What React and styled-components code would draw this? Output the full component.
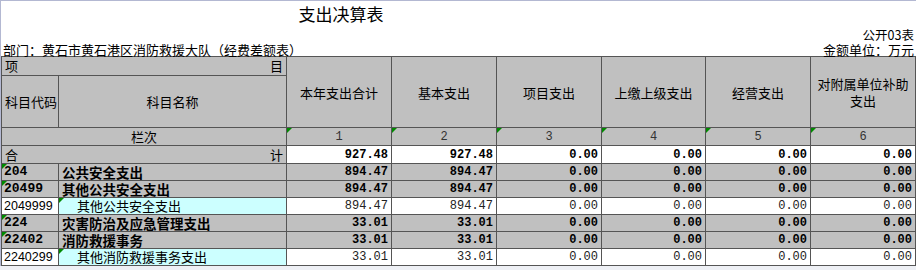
import React from 'react'
import styled, { createGlobalStyle, css } from 'styled-components'

const colors = {
	gray: '#c0c0c0',
	cyan: '#ccffff',
	white: '#ffffff',
	line: '#555555',
	frame: '#b3b8d2',
	marker: '#008a00'
}

const cjk = `"Noto Sans CJK SC", "Liberation Sans", sans-serif`
const mono = `"Liberation Mono", "Noto Sans CJK SC", monospace`

const GlobalStyle = createGlobalStyle`
	html, body {
		margin: 0;
		padding: 0;
		background: #eef0f5;
	}
	body {
		font-family: ${cjk};
		color: #000;
	}
`

const Sheet = styled.div`
	width: 915px;
	background: #fff;
	border-top: 1px solid ${colors.frame};
	border-left: 1px solid ${colors.frame};
`

const Caption = styled.div`
	width: 680px;
	height: 26px;
	line-height: 26px;
	text-align: center;
	font-size: 17px;
`

const SheetNo = styled.div`
	height: 14px;
	line-height: 14px;
	padding-top: 1px;
	padding-right: 2px;
	text-align: right;
	font-size: 12.5px;
`

const InfoRow = styled.div`
	display: flex;
	justify-content: space-between;
	align-items: flex-end;
	height: 14px;
	padding: 0 2px;
	font-size: 13px;
	line-height: 13px;
`

const Table = styled.table`
	width: 914px;
	table-layout: fixed;
	border-collapse: collapse;
`

const Row = styled.tr`
	height: ${p => p.h}px;
`

const Cell = styled.td`
	position: relative;
	padding: 0 3px;
	border: 1px solid ${colors.line};
	background: ${p => colors[p.bg || 'gray']};
	font-size: 13px;
	line-height: 14px;
	white-space: nowrap;
	vertical-align: middle;

	${p =>
		p.mark &&
		css`
			&::before {
				content: '';
				position: absolute;
				top: 0;
				left: 0;
				border-top: 5px solid ${colors.marker};
				border-right: 5px solid transparent;
			}
		`}
`

const HeadCell = styled(Cell)`
	text-align: center;
	white-space: normal;
	line-height: 17px;
`

const SplitCell = styled(Cell)`
	& > div {
		display: flex;
		justify-content: space-between;
	}
`

const CodeCell = styled(Cell)`
	padding-left: 2px;
	font-family: ${p => (p.bold ? mono : '"Liberation Sans", sans-serif')};
	font-weight: ${p => (p.bold ? 'bold' : 'normal')};
	font-size: ${p => (p.bold ? 13 : 12.5)}px;
`

const NameCell = styled(Cell)`
	padding-left: ${p => (p.indent ? 18 : 3)}px;
	font-weight: ${p => (p.bold ? 'bold' : 'normal')};
	font-size: ${p => (p.bold ? 13.5 : 13)}px;
`

const NumCell = styled(Cell)`
	text-align: right;
	padding-right: 3px;
	font-family: ${mono};
	font-size: 12px;
	font-weight: ${p => (p.bold ? 'bold' : 'normal')};
	color: ${p => (p.bold ? '#000' : '#222')};
`

const IndexCell = styled(Cell)`
	text-align: center;
	font-family: ${mono};
	font-size: 12px;
	color: #333;
`

const columns = ['本年支出合计', '基本支出', '项目支出', '上缴上级支出', '经营支出', '对附属单位补助支出']
const widths = [57, 228, 105, 105, 105, 104, 105, 105]

const rows = [
	{ code: '204', name: '公共安全支出', values: ['894.47', '894.47', '0.00', '0.00', '0.00', '0.00'], bold: true },
	{ code: '20499', name: '其他公共安全支出', values: ['894.47', '894.47', '0.00', '0.00', '0.00', '0.00'], bold: true },
	{ code: '2049999', name: '其他公共安全支出', values: ['894.47', '894.47', '0.00', '0.00', '0.00', '0.00'] },
	{ code: '224', name: '灾害防治及应急管理支出', values: ['33.01', '33.01', '0.00', '0.00', '0.00', '0.00'], bold: true },
	{ code: '22402', name: '消防救援事务', values: ['33.01', '33.01', '0.00', '0.00', '0.00', '0.00'], bold: true },
	{ code: '2240299', name: '其他消防救援事务支出', values: ['33.01', '33.01', '0.00', '0.00', '0.00', '0.00'] }
]

const totals = ['927.48', '927.48', '0.00', '0.00', '0.00', '0.00']

export default function App() {
	return (
		<Sheet>
			<GlobalStyle />
			<Caption>支出决算表</Caption>
			<SheetNo>公开03表</SheetNo>
			<InfoRow>
				<span>部门：黄石市黄石港区消防救援大队（经费差额表）</span>
				<span>金额单位：万元</span>
			</InfoRow>
			<Table>
				<colgroup>
					{widths.map((w, i) => (
						<col key={i} style={{ width: w }} />
					))}
				</colgroup>
				<tbody>
					<Row h={19}>
						<SplitCell colSpan={2}>
							<div>
								<span>项</span>
								<span>目</span>
							</div>
						</SplitCell>
						{columns.map(c => (
							<HeadCell key={c} rowSpan={2}>
								{c}
							</HeadCell>
						))}
					</Row>
					<Row h={52}>
						<Cell>科目代码</Cell>
						<HeadCell>科目名称</HeadCell>
					</Row>
					<Row h={18}>
						<HeadCell colSpan={2}>栏次</HeadCell>
						{columns.map((c, i) => (
							<IndexCell key={c} mark>
								{i + 1}
							</IndexCell>
						))}
					</Row>
					<Row h={18}>
						<SplitCell colSpan={2}>
							<div>
								<span>合</span>
								<span>计</span>
							</div>
						</SplitCell>
						{totals.map((v, i) => (
							<NumCell key={i} bg="white" bold>
								{v}
							</NumCell>
						))}
					</Row>
					{rows.map(r => (
						<Row h={17} key={r.code}>
							<CodeCell bold={r.bold} bg={r.bold ? 'gray' : 'white'} mark={r.bold}>
								{r.code}
							</CodeCell>
							<NameCell
								bold={r.bold}
								indent={!r.bold}
								bg={r.bold ? 'gray' : 'cyan'}
								mark={!r.bold}
							>
								{r.name}
							</NameCell>
							{r.values.map((v, i) => (
								<NumCell key={i} bold={r.bold} bg={r.bold ? 'gray' : 'white'}>
									{v}
								</NumCell>
							))}
						</Row>
					))}
				</tbody>
			</Table>
		</Sheet>
	)
}
